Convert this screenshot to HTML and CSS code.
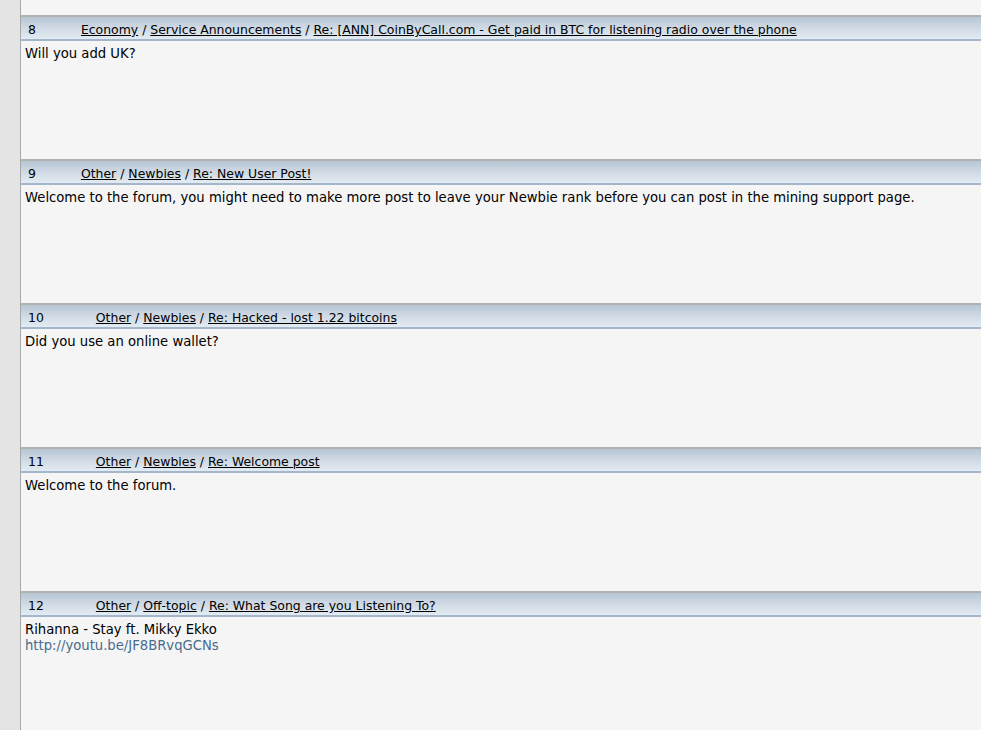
FILE: index.html
```html
<!DOCTYPE html>
<html>
<head>
<meta charset="utf-8">
<link rel="stylesheet" href="styles.css">
</head>
<body>
<div class="page">
  <div class="side"></div>
  <div class="main">
    <div class="tail"></div>

    <div class="post">
      <div class="head"><span class="num">8</span><a href="#">Economy</a> / <a href="#">Service Announcements</a> / <a href="#">Re: [ANN] CoinByCall.com - Get paid in BTC for listening radio over the phone</a></div>
      <div class="body">Will you add UK?</div>
    </div>

    <div class="post">
      <div class="head"><span class="num">9</span><a href="#">Other</a> / <a href="#">Newbies</a> / <a href="#">Re: New User Post!</a></div>
      <div class="body">Welcome to the forum, you might need to make more post to leave your Newbie rank before you can post in the mining support page.</div>
    </div>

    <div class="post">
      <div class="head"><span class="num wide">10</span><a href="#">Other</a> / <a href="#">Newbies</a> / <a href="#">Re: Hacked - lost 1.22 bitcoins</a></div>
      <div class="body">Did you use an online wallet?</div>
    </div>

    <div class="post">
      <div class="head"><span class="num wide">11</span><a href="#">Other</a> / <a href="#">Newbies</a> / <a href="#">Re: Welcome post</a></div>
      <div class="body">Welcome to the forum.</div>
    </div>

    <div class="post">
      <div class="head"><span class="num wide">12</span><a href="#">Other</a> / <a href="#">Off-topic</a> / <a href="#">Re: What Song are you Listening To?</a></div>
      <div class="body">Rihanna - Stay ft. Mikky Ekko<br><a class="url" href="#">http://youtu.be/JF8BRvqGCNs</a></div>
    </div>
  </div>
</div>
</body>
</html>
```

FILE: styles.css
```css
html, body {
  margin: 0;
  padding: 0;
  background: #f5f5f5;
  overflow: hidden;
}
body {
  font-family: "DejaVu Sans", Verdana, sans-serif;
  font-size: 13.2px;
  color: #000;
}
.page {
  display: flex;
  height: 730px;
}
.side {
  width: 20px;
  flex: none;
  background: #e4e4e5;
  border-right: 1px solid #a9a9a9;
}
.main {
  flex: 1;
  background: #f5f5f5;
  min-width: 0;
}
.tail {
  height: 15px;
}
.post {
  border-top: 2px solid #b1b1b1;
}
.head {
  height: 20px;
  padding-top: 2px;
  line-height: 22px;
  padding-left: 7px;
  font-size: 12.45px;
  white-space: nowrap;
  overflow: hidden;
  background: linear-gradient(to bottom, #b8c5d3 0%, #cdd8e3 45%, #e3ebf2 100%);
  border-bottom: 2px solid #a3b6ca;
  color: #000;
}
.head a {
  color: #000;
  text-decoration: underline;
}
.num {
  display: inline-block;
  margin-right: 45px;
}
.num.wide {
  margin-right: 52px;
}
.body {
  height: 118px;
  box-sizing: border-box;
  padding: 5px 4px 4px;
  line-height: 16px;
  white-space: nowrap;
}
.url {
  color: #476c8e;
  text-decoration: none;
}
```
